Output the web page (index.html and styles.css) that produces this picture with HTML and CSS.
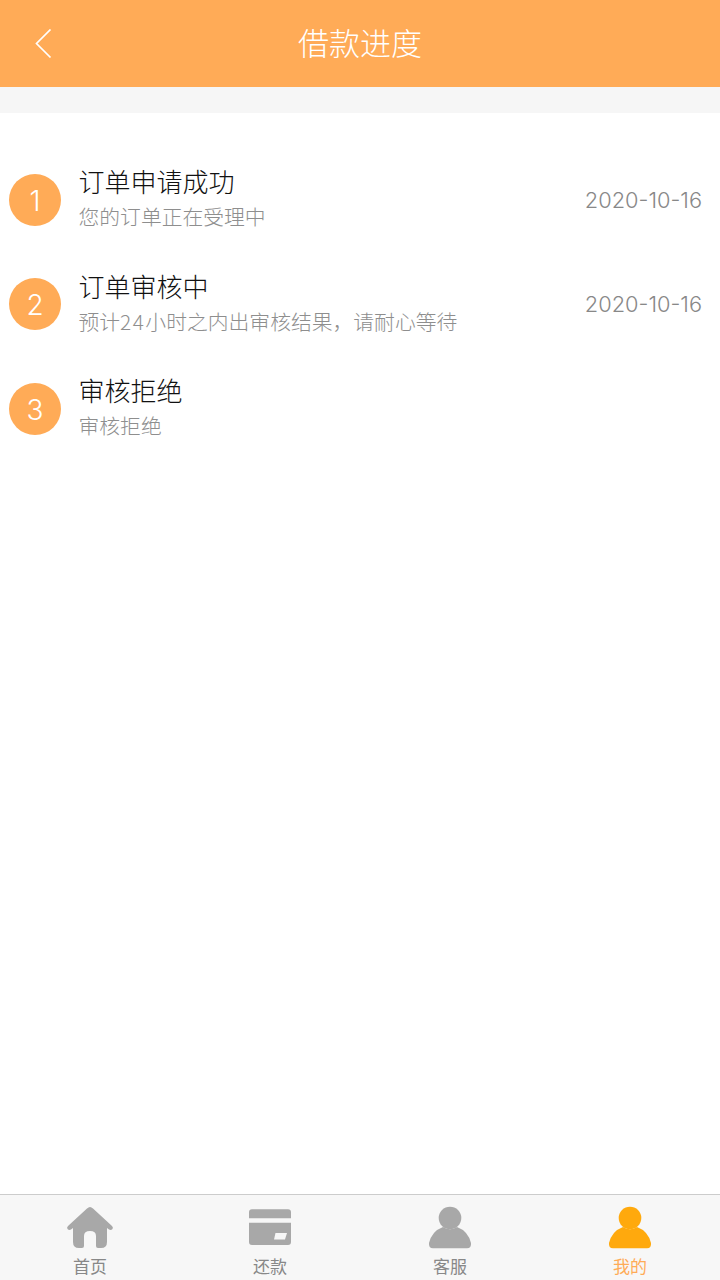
FILE: index.html
```html
<!DOCTYPE html>
<html lang="zh-CN">
<head>
<meta charset="utf-8">
<title>借款进度</title>
<link rel="stylesheet" href="styles.css">
</head>
<body>
<div class="app">
  <header class="header">
    <svg class="back" viewBox="0 0 17 30" width="17" height="30"><path d="M15.500 0.500 L1.500 14.500 L15.500 28.500" fill="none" stroke="#fff" stroke-width="1.700"/></svg>
    <h1 class="title">借款进度</h1>
  </header>
  <div class="band"></div>
  <main class="list">
    <div class="row">
      <div class="num">1</div>
      <div class="body"><div class="name">订单申请成功</div><div class="sub">您的订单正在受理中</div></div>
      <div class="date">2020-10-16</div>
    </div>
    <div class="row">
      <div class="num">2</div>
      <div class="body"><div class="name">订单审核中</div><div class="sub">预计<span class="digits">24</span>小时之内出审核结果，请耐心等待</div></div>
      <div class="date">2020-10-16</div>
    </div>
    <div class="row">
      <div class="num">3</div>
      <div class="body"><div class="name">审核拒绝</div><div class="sub">审核拒绝</div></div>
    </div>
  </main>
  <nav class="tabs">
    <div class="tab">
      <svg class="icon" viewBox="0 0 48 44" width="48" height="44"><path fill="#a8a8a8" d="M24 1 Q25.500 1 27 2.500 L46 20 Q47.500 21.500 46.500 23 Q45 24.500 43 23.500 L41 22 L41 36 Q41 42 35 42 L32 42 Q30 42 30 40 L30 30 Q30 25 24 25 Q18 25 18 30 L18 40 Q18 42 16 42 L13 42 Q7 42 7 36 L7 22 L5 23.500 Q3 24.500 1.500 23 Q0.500 21.500 2 20 L21 2.500 Q22.500 1 24 1 Z"/></svg>
      <span class="label">首页</span>
    </div>
    <div class="tab">
      <svg class="icon" viewBox="0 0 48 44" width="48" height="44"><path fill="#a8a8a8" d="M6 3.300 L42 3.300 Q45 3.300 45 6.300 L45 12.300 L3 12.300 L3 6.300 Q3 3.300 6 3.300 Z M3 16.700 L45 16.700 L45 36 Q45 39 42 39 L6 39 Q3 39 3 36 Z"/><path fill="#f7f7f7" d="M29.500 27 L41 27 L39 33.500 L28 33.500 Z"/></svg>
      <span class="label">还款</span>
    </div>
    <div class="tab">
      <svg class="icon" viewBox="0 0 48 44" width="48" height="44"><circle cx="24" cy="12" r="11.300" fill="#a8a8a8"/><path fill="#a8a8a8" d="M3 37 Q6 25 17 21 Q24 25.500 31 21 Q42 25 45 37 Q45.500 42.300 41 42.300 L7 42.300 Q2.500 42.300 3 37 Z"/></svg>
      <span class="label">客服</span>
    </div>
    <div class="tab active">
      <svg class="icon" viewBox="0 0 48 44" width="48" height="44"><circle cx="24" cy="12" r="11.300" fill="#ffa90d"/><path fill="#ffa90d" d="M3 37 Q6 25 17 21 Q24 25.500 31 21 Q42 25 45 37 Q45.500 42.300 41 42.300 L7 42.300 Q2.500 42.300 3 37 Z"/></svg>
      <span class="label">我的</span>
    </div>
  </nav>
</div>
</body>
</html>
```
FILE: styles.css
```css
* { box-sizing: border-box; }
html, body { margin: 0; padding: 0; }
body {
  background: #fff;
  font-family: "Noto Sans CJK SC", "Noto Sans", sans-serif;
}
.app {
  width: 720px;
  height: 1280px;
  display: flex;
  flex-direction: column;
  overflow: hidden;
}
.header {
  height: 87px;
  flex: none;
  background: #ffab57;
  display: flex;
  align-items: center;
  justify-content: center;
  padding-bottom: 4px;
  position: relative;
}
.back { position: absolute; left: 35px; top: 29px; }
.title {
  margin: 0;
  font-size: 31px;
  font-weight: 300;
  color: #fff;
  line-height: 1;
}
.band { height: 26px; flex: none; background: #f6f6f6; }
.list {
  flex: 1;
  padding-top: 35px;
  display: flex;
  flex-direction: column;
}
.row {
  height: 104.250px;
  display: flex;
  align-items: center;
  padding: 0 18px 0 9px;
}
.num {
  width: 52px;
  height: 52px;
  flex: none;
  border-radius: 50%;
  background: #ffab57;
  color: #fff;
  font-family: "Inter", "Liberation Sans", sans-serif;
  font-weight: 300;
  font-size: 28px;
  padding-top: 2px;
  display: flex;
  align-items: center;
  justify-content: center;
}
.body { flex: 1; margin-left: 18.500px; padding-bottom: 5.500px; }
.name {
  font-size: 26px;
  font-weight: 300;
  line-height: 34px;
  color: #111;
  margin-left: -1px;
}
.sub {
  font-size: 20.800px;
  font-weight: 300;
  line-height: 28px;
  color: #8e8e8e;
  margin-top: 4px;
  margin-left: -1px;
}
.digits { letter-spacing: 1.500px; }
.date {
  font-family: "Inter", "Liberation Sans", sans-serif;
  font-size: 21.800px;
  font-weight: 300;
  color: #888;
}
.tabs {
  height: 86px;
  flex: none;
  background: #f7f7f7;
  border-top: 1px solid #ccc;
  display: grid;
  grid-template-columns: repeat(4, 1fr);
}
.tab {
  display: flex;
  flex-direction: column;
  align-items: center;
  padding-top: 11px;
}
.icon { display: block; }
.label {
  font-size: 17px;
  line-height: 24px;
  margin-top: 4px;
  color: #888;
}
.active .label { color: #ffab57; }
```
